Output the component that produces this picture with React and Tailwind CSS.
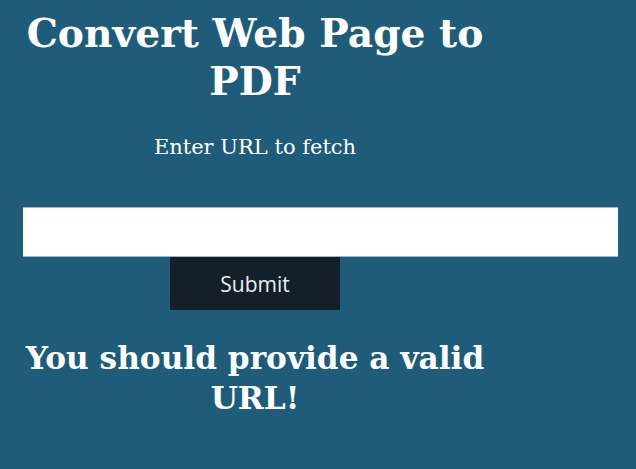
import React, { useState } from "react";

const serif = { fontFamily: '"DejaVu Serif", serif' };

export default function App() {
  const [url, setUrl] = useState("");

  return (
    <div className="min-h-[469px] w-full bg-[#1e5c7a] pl-[23px] text-white" style={serif}>
      {/* Title */}
      <div className="-ml-[18px] w-[500px] pt-[9px] text-center">
        <h1 className="text-[39.2px] font-bold leading-[48px]">Convert Web Page to PDF</h1>
        <p className="mt-[30px] text-[21px] leading-[24px]">Enter URL to fetch</p>
      </div>

      {/* Form */}
      <form className="mt-[48px] flex flex-col" onSubmit={(e) => e.preventDefault()}>
        <input
          type="text"
          value={url}
          onChange={(e) => setUrl(e.target.value)}
          className="h-[50px] w-[595px] border-y border-[#9fb8c6] bg-white px-2 text-black outline-none"
        />
        <div className="flex w-[464px] justify-center">
          <button
            type="submit"
            className="h-[53px] w-[170px] bg-[#131f29] pt-[3px] text-[21px] text-[#e8eef2]"
            style={{ fontFamily: '"Open Sans", sans-serif' }}
          >
            Submit
          </button>
        </div>
      </form>

      {/* Error */}
      <div className="-ml-[18px] w-[500px] pt-[28px] text-center">
        <h2 className="text-[31.2px] font-bold leading-[40px]">You should provide a valid URL!</h2>
      </div>
    </div>
  );
}
